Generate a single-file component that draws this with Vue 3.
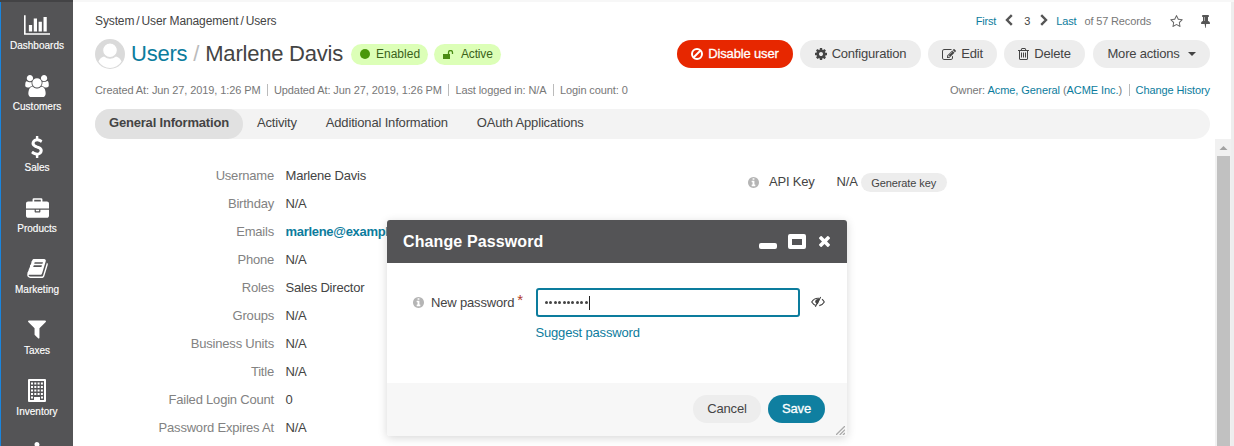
<script setup>
const icons = {
  chart: { vb: '0 128 2048 1536', d: 'M640 896v512h-256v-512h256zm384-512v1024h-256v-1024h256zm1024 1152v128h-2048v-1536h128v1408h1920zm-640-896v768h-256v-768h256zm384-384v1152h-256v-1152h256z' },
  users: { vb: '64 0 1920 1792', d: 'M657 896q-162 5-265 128h-134q-82 0-138-40.5t-56-118.5q0-353 124-353 6 0 43.5 21t97.5 42.5 119 21.5q67 0 133-23-5 37-5 66 0 159 81 283zm1071 637q0 120-73 189.5t-194 69.5h-874q-121 0-194-69.5t-73-189.5q0-53 3.5-103.5t14-109 26.5-108.5 43-97.5 62-81 85.5-53.5 111.5-20q10 0 43 21.5t73 48 107 48 135 21.5 135-21.5 107-48 73-48 43-21.5q61 0 111.5 20t85.5 53.5 62 81 43 97.5 26.5 108.5 14 109 3.5 103.5zm-1024-1277q0 106-75 181t-181 75-181-75-75-181 75-181 181-75 181 75 75 181zm704 384q0 159-112.5 271.5t-271.5 112.5-271.5-112.5-112.5-271.5 112.5-271.5 271.5-112.5 271.5 112.5 112.5 271.5zm576 225q0 78-56 118.5t-138 40.5h-134q-103-123-265-128 81-124 81-283 0-29-5-66 66 23 133 23 59 0 119-21.5t97.5-42.5 43.5-21q124 0 124 353zm-128-609q0 106-75 181t-181 75-181-75-75-181 75-181 181-75 181 75 75 181z' },
  dollar: { vb: '420 0 952 1792', d: 'M1362 1185q0 153-99.5 263.5t-258.5 136.5v175q0 14-9 23t-23 9h-135q-13 0-22.5-9.5t-9.5-22.5v-175q-66-9-127.5-31t-101.5-44.5-74-48-46.5-37.5-17.5-18q-17-21-2-41l103-135q7-10 23-12 15-2 24 9l2 2q113 99 243 125 37 8 74 8 81 0 142.5-43t61.5-122q0-28-15-53t-33.5-42-58.5-37.5-66-32-80-32.5q-39-16-61.5-25t-61.5-26.5-62.5-31-56.5-35.5-53.5-42.5-43.5-49-35.5-58-21-66.5-8.5-78q0-138 98-242t255-134v-180q0-13 9.5-22.5t22.5-9.5h135q14 0 23 9t9 23v176q57 6 110.5 23t87 33.5 63.5 37.5 39 29 15 14q17 18 5 38l-81 146q-8 15-23 16-14 3-27-7-3-3-14.5-12t-39-26.5-58.5-32-74.5-26-85.5-11.5q-95 0-155 43t-60 111q0 26 8.5 48t29.5 41.5 39.5 33 56 31 60.5 27 70 27.5q53 20 81 31.5t76 35 75.5 42.5 62 50 53 63.5 31.5 76.5 13 94z' },
  briefcase: { vb: '0 0 1792 1536', d: 'M640 256h512v-128h-512v128zm1152 640v480q0 66-47 113t-113 47h-1472q-66 0-113-47t-47-113v-480h672v160q0 26 19 45t45 19h320q26 0 45-19t19-45v-160h672zm-768 0v128h-256v-128h256zm768-480v384h-1792v-384q0-66 47-113t113-47h352v-160q0-40 28-68t68-28h576q40 0 68 28t28 68v160h352q66 0 113 47t47 113z' },
  book: { vb: '64 128 1664 1536', d: 'M1703 478q40 57 18 129l-275 906q-19 64-76.5 107.5t-122.5 43.5h-923q-77 0-148.5-53.5t-99.5-131.5q-24-67-2-127 0-4 3-27t4-37q1-8-3-21.5t-3-19.5q2-11 8-21t16.5-23.5 16.5-23.5q23-38 45-91.5t30-91.5q3-10 .5-30t-.5-28q3-11 17-28t17-23q21-36 42-92t25-90q1-9-2.5-32t.5-28q4-13 22-30.5t22-22.5q19-26 42.5-84.5t27.5-96.5q1-8-3-25.5t-2-26.5q2-8 9-18t18-23 17-21q8-12 16.5-30.5t15-35 16-36 19.5-32 26.5-23.5 36-11.5 47.5 5.5l-1 3q38-9 51-9h761q74 0 114 56t18 130l-274 906q-36 119-71.5 153.5t-128.5 34.5h-869q-27 0-38 15-11 16-1 43 24 70 144 70h923q29 0 56-15.5t35-41.5l300-987q7-22 5-57 38 15 59 43zm-1064 2q-4 13 2 22.5t20 9.5h608q13 0 25.5-9.5t16.5-22.5l21-64q4-13-2-22.5t-20-9.5h-608q-13 0-25.5 9.5t-16.5 22.5zm-83 256q-4 13 2 22.5t20 9.5h608q13 0 25.5-9.5t16.5-22.5l21-64q4-13-2-22.5t-20-9.5h-608q-13 0-25.5 9.5t-16.5 22.5z' },
  filter: { vb: '190 256 1411 1410', d: 'M1595 295q17 41-14 70l-493 493v742q0 42-39 59-13 5-25 5-27 0-45-19l-256-256q-19-19-19-45v-486l-493-493q-31-29-14-70 17-39 59-39h1280q42 0 59 39z' },
  building: { vb: '0 0 18 23', d: 'M0 1q0-1 1-1h16q1 0 1 1v21q0 1-1 1H1q-1 0-1-1zM2 2v19h4v-3h6v3h4V2zM3 3.500h2v2H3zm3.300 0h2v2h-2zm3.300 0h2v2h-2zm3.300 0h2v2h-2zM3 7h2v2H3zm3.300 0h2v2h-2zm3.300 0h2v2h-2zm3.300 0h2v2h-2zM3 10.500h2v2H3zm3.300 0h2v2h-2zm3.300 0h2v2h-2zm3.300 0h2v2h-2zM3 14h2v2H3zm3.300 0h2v2h-2zm3.300 0h2v2h-2zm3.300 0h2v2h-2zM3 17.500h2v2H3zm10 0h2v2h-2z' },
  tree: { vb: '0 0 18 18', d: 'M6.500 2a2.500 2.500 0 0 1 5 0q0 1.500-1.500 2.500v6h6v7H2v-7h6v-6Q6.500 3.500 6.500 2z' },
  cog: { vb: '128 128 1536 1536', d: 'M1152 896q0-106-75-181t-181-75-181 75-75 181 75 181 181 75 181-75 75-181zm512-109v222q0 12-8 23t-20 13l-185 28q-19 54-39 91 35 50 107 138 10 12 10 25t-9 23q-27 37-99 108t-94 71q-12 0-26-9l-138-108q-44 23-91 38-16 136-29 186-7 28-36 28h-222q-14 0-24.500-8.500t-11.500-21.500l-28-184q-49-16-90-37l-141 107q-10 9-25 9-14 0-25-11-126-114-165-168-7-10-7-23 0-12 8-23 15-21 51-66.500t54-70.500q-27-50-41-99l-183-27q-13-2-21-12.500t-8-23.500v-222q0-12 8-23t19-13l186-28q14-46 39-92-40-57-107-138-10-12-10-24 0-10 9-23 26-36 98.500-107.500t94.500-71.500q13 0 26 10l138 107q44-23 91-38 16-136 29-186 7-28 36-28h222q14 0 24.500 8.500t11.500 21.500l28 184q49 16 90 37l142-107q9-9 24-9 13 0 25 10 129 119 165 170 7 8 7 22 0 12-8 23-15 21-51 66.500t-54 70.500q26 50 41 98l183 28q13 2 21 12.500t8 23.500z' },
  edit: { vb: '0 128 1792 1408', d: 'M888 1184l116-116-152-152-116 116v56h96v96h56zm440-720q-16-16-33 1l-350 350q-17 17-1 33t33-1l350-350q17-17 1-33zm80 594v190q0 119-84.500 203.500t-203.500 84.500h-832q-119 0-203.500-84.500t-84.500-203.500v-832q0-119 84.500-203.500t203.500-84.500h832q63 0 117 25 15 7 18 23 3 17-9 29l-49 49q-14 14-32 8-23-6-45-6h-832q-66 0-113 47t-47 113v832q0 66 47 113t113 47h832q66 0 113-47t47-113v-126q0-13 9-22l64-64q15-15 35-7t20 29zm-96-738l288 288-672 672h-288v-288zm444 132l-92 92-288-288 92-92q28-28 68-28t68 28l152 152q28 28 28 68t-28 68z' },
  trash: { vb: '192 128 1408 1536', d: 'M704 736v576q0 14-9 23t-23 9h-64q-14 0-23-9t-9-23v-576q0-14 9-23t23-9h64q14 0 23 9t9 23zm256 0v576q0 14-9 23t-23 9h-64q-14 0-23-9t-9-23v-576q0-14 9-23t23-9h64q14 0 23 9t9 23zm256 0v576q0 14-9 23t-23 9h-64q-14 0-23-9t-9-23v-576q0-14 9-23t23-9h64q14 0 23 9t9 23zm128 724v-948h-896v948q0 22 7 40.500t14.500 27 10.500 8.500h832q3 0 10.500-8.500t14.500-27 7-40.500zm-672-1076h448l-48-117q-7-9-17-11h-317q-10 2-17 11zm928 32v64q0 14-9 23t-23 9h-96v948q0 83-47 143.500t-113 60.500h-832q-66 0-113-58.500t-47-141.500v-952h-96q-14 0-23-9t-9-23v-64q0-14 9-23t23-9h309l70-167q15-37 54-63t79-26h320q40 0 79 26t54 63l70 167h309q14 0 23 9t9 23z' },
  star: { vb: '64 32 1664 1587', d: 'M1201 1004l306-297-422-62-189-382-189 382-422 62 306 297-73 421 378-199 377 199zm527-357q0 22-26 48l-363 354 86 500q1 7 1 20 0 50-41 50-19 0-40-12l-449-236-449 236q-22 12-40 12-21 0-31.500-14.500t-10.500-35.500q0-6 2-20l86-500-364-354q-25-27-25-48 0-37 56-46l502-73 225-455q19-41 49-41t49 41l225 455 502 73q56 9 56 46z' },
  pin: { vb: '320 128 1152 1664', d: 'M800 864v-448q0-14-9-23t-23-9-23 9-9 23v448q0 14 9 23t23 9 23-9 9-23zm672 352q0 26-19 45t-45 19h-429l-51 483q-2 12-10.500 20.500t-20.500 8.500h-1q-27 0-32-27l-76-485h-404q-26 0-45-19t-19-45q0-123 78.500-221.500t177.500-98.500v-512q-52 0-90-38t-38-90 38-90 90-38h640q52 0 90 38t38 90-38 90-90 38v512q99 0 177.500 98.500t78.500 221.500z' },
  info: { vb: '128 128 1536 1536', d: 'M1152 1376v-160q0-14-9-23t-23-9h-96v-512q0-14-9-23t-23-9h-320q-14 0-23 9t-9 23v160q0 14 9 23t23 9h96v320h-96q-14 0-23 9t-9 23v160q0 14 9 23t23 9h448q14 0 23-9t9-23zm-128-896v-160q0-14-9-23t-23-9h-192q-14 0-23 9t-9 23v160q0 14 9 23t23 9h192q14 0 23-9t9-23zm640 416q0 209-103 385.500t-279.500 279.500-385.500 103-385.500-103-279.500-279.500-103-385.500 103-385.500 279.500-279.500 385.500-103 385.500 103 279.500 279.500 103 385.500z' },
  times: { vb: '302 366 1188 1188', d: 'M1490 1322q0 40-28 68l-136 136q-28 28-68 28t-68-28l-294-294-294 294q-28 28-68 28t-68-28l-136-136q-28-28-28-68t28-68l294-294-294-294q-28-28-28-68t28-68l136-136q28-28 68-28t68 28l294 294 294-294q28-28 68-28t68 28l136 136q28 28 28 68t-28 68l-294 294 294 294q28 28 28 68z' },
}
const nav = [
  ['chart', 'Dashboards', 'i26'], ['users', 'Customers', 'i24'], ['dollar', 'Sales', 'i12'],
  ['briefcase', 'Products', 'i23'], ['book', 'Marketing', 'i21'], ['filter', 'Taxes', 'i18'],
  ['building', 'Inventory', 'i18'], ['tree', '', 'i18'],
]
const fields = [
  ['Username', 'Marlene Davis'], ['Birthday', 'N/A'], ['Emails', 'marlene@example.com'], ['Phone', 'N/A'],
  ['Roles', 'Sales Director'], ['Groups', 'N/A'], ['Business Units', 'N/A'], ['Title', 'N/A'],
  ['Failed Login Count', '0'], ['Password Expires At', 'N/A'],
]
</script>

<template>
  <div class="app">
    <nav class="side">
      <a v-for="n in nav" :key="n[0]" class="nav-item">
        <span class="nav-icon"><svg :class="n[2]" :viewBox="icons[n[0]].vb"><path fill-rule="evenodd" :d="icons[n[0]].d" /></svg></span>
        <span class="nav-label">{{ n[1] }}</span>
      </a>
    </nav>
    <main class="main">
      <header class="head">
        <div class="row crumbs">
          <div class="trail">System<i>/</i>User Management<i>/</i>Users</div>
          <div class="pager">
            <a class="first">First</a>
            <svg class="chev" viewBox="0 0 8 12"><path d="M6.800 1.200 2 6l4.800 4.800" /></svg>
            <span class="page">3</span>
            <svg class="chev" viewBox="0 0 8 12"><path d="M1.200 1.200 6 6l-4.800 4.800" /></svg>
            <a class="last">Last</a><span class="of">of 57 Records</span>
            <svg class="star" :viewBox="icons.star.vb"><path :d="icons.star.d" /></svg>
            <svg class="pin" :viewBox="icons.pin.vb"><path :d="icons.pin.d" /></svg>
          </div>
        </div>
        <div class="row title-row">
          <svg class="avatar" viewBox="0 0 30 30"><circle cx="15" cy="15" r="15" fill="#dadada" /><path d="M3.500 22.500Q5 18.500 9 17.500q6 4.500 12 0 4 1 5.500 5a13.500 13.500 0 0 1-23 0z" fill="#fff" /><circle cx="15" cy="11.300" r="7.400" fill="#fff" stroke="#dadada" stroke-width="1.200" /></svg>
          <h1><a>Users</a><i>/</i>Marlene Davis</h1>
          <span class="badge enabled"><b class="dot"></b>Enabled</span>
          <span class="badge active"><svg viewBox="0 0 11 9"><path d="M0 4h7v5H0z" /><path d="M5.500 4V2.500a2 2 0 0 1 4 0V4" fill="none" stroke="#4a8c14" stroke-width="1.300" /></svg>Active</span>
          <div class="actions">
            <button class="btn danger"><svg class="ban" viewBox="0 0 12 12"><circle cx="6" cy="6" r="5" /><path d="m2.500 9.500 7-7" /></svg>Disable user</button>
            <button class="btn config"><svg class="cog" :viewBox="icons.cog.vb"><path :d="icons.cog.d" /></svg>Configuration</button>
            <button class="btn edit"><svg :viewBox="icons.edit.vb"><path :d="icons.edit.d" /></svg>Edit</button>
            <button class="btn delete"><svg :viewBox="icons.trash.vb"><path :d="icons.trash.d" /></svg>Delete</button>
            <button class="btn more">More actions<b class="caret"></b></button>
          </div>
        </div>
        <div class="row meta">
          <span class="m1">Created At: Jun 27, 2019, 1:26 PM</span><span class="m2">Updated At: Jun 27, 2019, 1:26 PM</span><span class="m3">Last logged in: N/A</span><span class="m4">Login count: 0</span>
          <span class="owner">Owner: <a>Acme, General</a> (<a>ACME Inc.</a>)</span><span class="history"><a>Change History</a></span>
        </div>
        <div class="tabs">
          <span class="tab on">General Information</span><span class="tab t2">Activity</span><span class="tab t3">Additional Information</span><span class="tab t4">OAuth Applications</span>
        </div>
      </header>
      <section class="content">
        <div class="fields">
          <div v-for="f in fields" :key="f[0]" class="field">
            <label>{{ f[0] }}</label><span :class="{ mail: f[0] === 'Emails' }">{{ f[1] }}</span>
          </div>
        </div>
        <div class="api">
          <svg class="info" :viewBox="icons.info.vb"><path :d="icons.info.d" /></svg>
          <span class="key">API Key</span><span class="na">N/A</span><button class="gen">Generate key</button>
        </div>
        <div class="scroll"><svg viewBox="0 0 16 17"><path d="M4.500 11 8.500 7 12.500 11z" fill="#a3a3a3" /></svg><div class="thumb"></div></div>
      </section>
    </main>
    <div class="edge"></div>
    <div class="topline"></div>

    <div class="dialog">
      <div class="dlg-head">
        <h2>Change Password</h2>
        <b class="min"></b><b class="max"></b>
        <svg class="close" :viewBox="icons.times.vb"><path :d="icons.times.d" /></svg>
      </div>
      <div class="dlg-body">
        <div class="pw-row">
          <svg class="info" :viewBox="icons.info.vb"><path :d="icons.info.d" /></svg>
          <label>New password</label><span class="req">*</span>
          <div class="input"><b v-for="i in 10" :key="i"></b><i></i></div>
          <svg class="eye" viewBox="0 0 14 12"><path d="M5.500 9.700Q2.500 9 .7 6 3 2.300 7 2.300h1M11 3.300q1.300.9 2.300 2.700-1.700 3-5 3.600M4.300 10.700l5.400-9.600" fill="none" stroke="#444" stroke-width="1.100" /><path d="M6.800 8.300Q4 7.500 4.200 5 4.700 3 7.500 2.800L9 2.500z" fill="#444" /></svg>
        </div>
        <a class="suggest">Suggest password</a>
      </div>
      <div class="dlg-foot">
        <button class="btn cancel">Cancel</button><button class="btn save">Save</button>
        <svg class="grip" viewBox="0 0 9 9"><path d="M0 9 9 0M3.700 9 9 3.700M7 9l2-2" stroke="#aaa" stroke-width="1.300" /></svg>
      </div>
    </div>
  </div>
</template>

<style>
body { margin: 0; overflow: hidden; }
</style>
<style scoped>
* { box-sizing: border-box; }
.app { position: relative; width: 1234px; height: 446px; overflow: hidden; display: flex; background: #fff; font: 13px/18px "Liberation Sans", Arial, sans-serif; color: #444; letter-spacing: -.2px; white-space: nowrap; }
svg { fill: currentColor; flex: none; display: block; }
a { color: #0c7c9d; }
i { font-style: normal; }
button { border: 0; font: inherit; color: inherit; letter-spacing: inherit; }
.side { width: 73px; flex: none; background: #545456; border-left: 1px solid #1a85dd; color: #fff; padding-top: 9px; overflow: hidden; }
.nav-item { display: flex; flex-direction: column; align-items: center; height: 61px; flex: none; color: #fff; }
.nav-icon { height: 31px; display: flex; align-items: center; }
.nav-label { font-size: 10px; line-height: 12px; letter-spacing: .02px; -webkit-text-stroke: .15px #fff; }
.i26 { width: 26px; height: 20px; } .i24 { width: 24px; height: 22px; } .i12 { width: 12px; height: 22px; }
.i23 { width: 23px; height: 20px; } .i21 { width: 21px; height: 19px; } .i18 { width: 18px; height: 23px; }
.main { flex: 1; min-width: 0; padding-top: 2px; display: flex; flex-direction: column; }
.head { padding: 10px 21px 0 22px; }
.row { display: flex; align-items: center; }
.crumbs { height: 18px; font-size: 12px; letter-spacing: -.12px; }
.trail i { margin: 0 2px; }
.pager { margin-left: auto; display: flex; align-items: center; font-size: 11px; letter-spacing: -.15px; }
.chev { width: 8px; height: 12px; fill: none; stroke: #555; stroke-width: 2.400; margin-left: 9px; margin-top: -2px; }
.page { margin: 0 1px 0 11px; }
.last { margin: 0 8px; }
.of { color: #777; }
.star { width: 13px; height: 12px; margin-left: 19px; color: #666; }
.pin { width: 9px; height: 13px; margin-left: 18px; color: #555; }
.title-row { height: 30px; margin-top: 9px; }
.avatar { width: 30px; height: 30px; }
h1 { margin: 0 0 0 6px; font-size: 22px; line-height: 30px; font-weight: 400; letter-spacing: -.22px; }
h1 i { color: #bbb; margin: 0 6px; }
.badge { height: 21px; border-radius: 11px; background: #dcffb7; color: #3b621a; display: flex; align-items: center; font-size: 12px; letter-spacing: -.17px; }
.enabled { width: 77px; margin-left: 8px; padding-left: 9px; letter-spacing: 0; }
.active { width: 67px; margin-left: 6px; padding-left: 9px; }
.active svg { width: 11px; height: 9px; margin-right: 7px; color: #4a8c14; }
.dot { width: 10px; height: 10px; border-radius: 5px; background: #49970b; margin-right: 6px; }
.actions { display: flex; margin-left: auto; gap: 7px; }
.btn { height: 28px; border-radius: 14px; background: #ededed; padding: 0; display: flex; align-items: center; justify-content: center; }
.btn svg { margin-right: 5px; width: 12px; height: 12px; }
.btn.danger { width: 116px; background: #e72700; color: #fff; -webkit-text-stroke: .3px #fff; letter-spacing: -.15px; }
.ban { fill: none; stroke: #fff; stroke-width: 2; }
.config { width: 121px; } .edit { width: 69px; } .delete { width: 81px; } .more { width: 117px; margin-left: 1px; }
.edit svg { width: 14px; height: 11px; } .delete svg { width: 11px; }
.caret { border: 4px solid transparent; border-top-color: #444; border-bottom: 0; margin-left: 8px; }
.meta { height: 18px; margin-top: 12px; font-size: 11px; color: #777; letter-spacing: -.1px; }
.meta > span { line-height: 12px; }
.m2, .m3, .m4, .history { border-left: 1px solid #bbb; padding-left: 6px; margin-left: 6.500px; }
.owner { margin-left: auto; letter-spacing: -.07px; }
.history { letter-spacing: -.1px; }
.tabs { height: 30px; margin-top: 10px; background: #f3f3f3; border-radius: 15px; display: flex; line-height: 27px; letter-spacing: -.17px; }
.on { width: 148px; border-radius: 15px; background: #e1e1e1; padding-left: 14px; font-weight: 700; letter-spacing: -.19px; }
.t2 { margin-left: 14px; } .t3 { margin-left: 29px; } .t4 { margin-left: 29px; }
.content { flex: 1; display: flex; overflow: hidden; }
.fields { width: 650px; padding-top: 23px; }
.field { display: flex; height: 28px; line-height: 28px; }
.field label { width: 201px; text-align: right; color: #828282; margin-right: 11.500px; }
.mail { color: #0c7c9d; font-weight: 700; letter-spacing: -.3px; }
.api { display: flex; align-items: center; height: 20px; margin: 33px 0 0 25px; }
.info { width: 11px; height: 11px; color: #b5b5b5; }
.key { margin-left: 10px; } .na { margin-left: 22px; }
.gen { width: 86px; height: 19px; border-radius: 10px; background: #ededed; margin-left: 3px; font-size: 11px; padding: 0; margin-top: 1px; letter-spacing: -.1px; }
.scroll { width: 16px; margin-left: auto; background: #f1f1f1; }
.scroll svg { width: 16px; height: 17px; }
.thumb { width: 13px; height: 300px; background: #c1c1c1; margin-left: 2px; }
.edge { width: 3px; background: #eee; }
.topline { position: absolute; left: 0; right: 0; top: 0; height: 2px; background: linear-gradient(90deg, #434345 73px, #f7f7f7 73px); }
.dialog { position: absolute; left: 387px; top: 220px; width: 460px; height: 216px; border-radius: 3px; background: #fff; box-shadow: 0 2px 10px rgba(0,0,0,.16); display: flex; flex-direction: column; overflow: hidden; }
.dlg-head { height: 43px; background: #545456; color: #fff; display: flex; align-items: center; padding: 0 17px 0 16px; }
h2 { margin: 0 auto 0 0; font-size: 16px; letter-spacing: .12px; }
.min { width: 18px; height: 6px; border-radius: 2px; background: #fff; margin: 8px 11px 0 0; }
.max { width: 18px; height: 15px; border: 4px solid #fff; border-top-width: 5px; border-radius: 2px; margin-right: 13px; }
.close { width: 11px; height: 11px; }
.dlg-body { height: 120px; padding: 25px 22px 0 26px; letter-spacing: -.17px; }
.pw-row { display: flex; align-items: center; height: 29px; }
.pw-row label { margin-left: 7px; }
.req { color: #b13a29; font-size: 15px; margin: -6px 0 0 3px; }
.input { width: 264px; height: 29px; border: 2px solid #0c7c9d; border-radius: 3px; margin-left: auto; display: flex; align-items: center; padding-left: 7px; }
.input b { width: 3px; height: 3px; border-radius: 2px; background: #444; margin-right: 1.400px; }
.input i { width: 1px; height: 14px; background: #222; }
.eye { width: 14px; height: 12px; margin: -2px 0 0 11px; }
.suggest { display: block; margin: 7px 0 0 122.500px; }
.dlg-foot { position: relative; flex: 1; background: #f7f7f7; display: flex; justify-content: flex-end; padding: 12px 22px 0 0; gap: 7px; }
.cancel { width: 68px; } .save { width: 57px; background: #0f7fa0; color: #fff; -webkit-text-stroke: .3px #fff; }
.grip { position: absolute; right: 2px; bottom: 1px; width: 9px; height: 9px; }
</style>
